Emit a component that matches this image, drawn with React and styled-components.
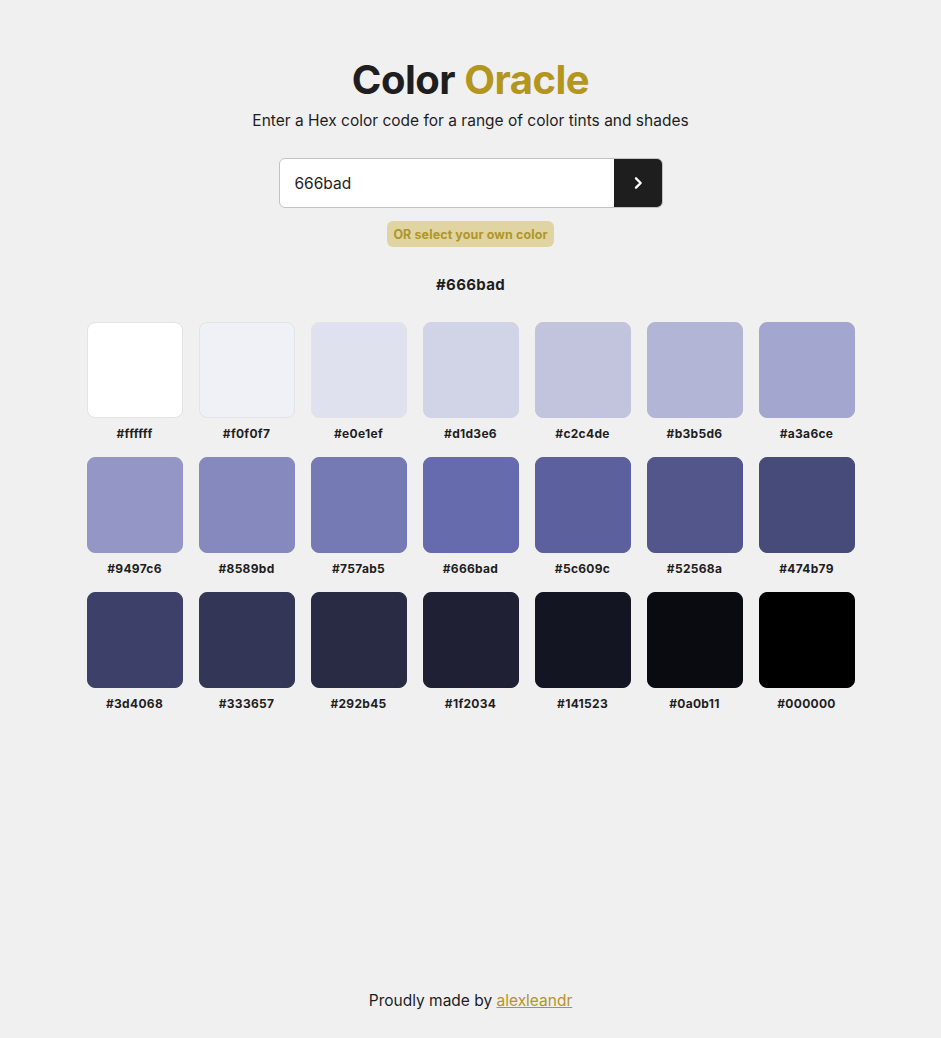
import React, { useState } from 'react';
import styled, { createGlobalStyle } from 'styled-components';

const GlobalStyle = createGlobalStyle`
  * { box-sizing: border-box; }
  html, body { margin: 0; padding: 0; }
  body {
    background: #f0f0f0;
    color: #1e1e1e;
    font-family: Inter, "Noto Sans", sans-serif;
  }
`;

const Page = styled.div`
  min-height: 100vh;
  display: flex;
  flex-direction: column;
  align-items: center;
`;

const Main = styled.main`
  flex: 1;
  display: flex;
  flex-direction: column;
  align-items: center;
  padding-top: 56px;
`;

const Title = styled.h1`
  margin: 0;
  font-size: 40px;
  line-height: 48px;
  font-weight: 700;
  letter-spacing: -0.5px;
  color: #1e1e1e;
`;

const Accent = styled.span`
  color: #b3961e;
`;

const Subtitle = styled.p`
  margin: 7px 0 0;
  font-size: 15.5px;
  line-height: 20px;
  color: #1e1e1e;
`;

const Form = styled.form`
  margin-top: 27px;
  width: 384px;
  height: 50px;
  display: flex;
  border: 1px solid #c2c2c2;
  border-radius: 6px;
  overflow: hidden;
  background: #fff;
`;

const Input = styled.input`
  flex: 1;
  border: none;
  outline: none;
  padding: 0 15px;
  font-family: inherit;
  font-size: 15.5px;
  color: #1e1e1e;
  background: transparent;
`;

const Submit = styled.button`
  width: 48px;
  border: none;
  background: #1e1e1e;
  color: #fff;
  display: flex;
  align-items: center;
  justify-content: center;
  cursor: pointer;
  padding: 0;
`;

const Picker = styled.label`
  margin-top: 13px;
  padding: 0 6px;
  height: 26px;
  display: flex;
  align-items: center;
  border-radius: 6px;
  background: #e0d5a2;
  color: #b0962a;
  font-size: 12.5px;
  font-weight: 700;
  letter-spacing: 0.1px;
  cursor: pointer;
`;

const Current = styled.h2`
  margin: 28px 0 0;
  font-size: 15px;
  line-height: 20px;
  font-weight: 700;
  letter-spacing: 0.3px;
`;

const Grid = styled.div`
  margin-top: 27px;
  display: grid;
  grid-template-columns: repeat(7, 96px);
  column-gap: 16px;
  row-gap: 15px;
`;

const Cell = styled.div`
  display: flex;
  flex-direction: column;
  align-items: center;
`;

const Swatch = styled.div`
  width: 96px;
  height: 96px;
  border-radius: 8px;
  border: 1px solid ${p => (p.$light ? '#e3e3e6' : p.$color)};
  background: ${p => p.$color};
`;

const Label = styled.span`
  margin-top: 8px;
  font-size: 12px;
  line-height: 16px;
  font-weight: 700;
  letter-spacing: 0.3px;
`;

const Footer = styled.footer`
  padding-bottom: 27px;
  font-size: 15.5px;
  line-height: 20px;
`;

const Link = styled.a`
  color: #b3961e;
`;

const shades = [
  'ffffff', 'f0f0f7', 'e0e1ef', 'd1d3e6', 'c2c4de', 'b3b5d6', 'a3a6ce',
  '9497c6', '8589bd', '757ab5', '666bad', '5c609c', '52568a', '474b79',
  '3d4068', '333657', '292b45', '1f2034', '141523', '0a0b11', '000000',
];

export default function App() {
  const [value, setValue] = useState('666bad');

  return (
    <Page>
      <GlobalStyle />
      <Main>
        <Title>Color <Accent>Oracle</Accent></Title>
        <Subtitle>Enter a Hex color code for a range of color tints and shades</Subtitle>
        <Form onSubmit={e => e.preventDefault()}>
          <Input value={value} onChange={e => setValue(e.target.value)} />
          <Submit type="submit" aria-label="Generate">
            <svg width="16" height="16" viewBox="0 0 24 24" fill="none" stroke="currentColor" strokeWidth="3.5" strokeLinecap="round" strokeLinejoin="round">
              <path d="M9 5l7 7-7 7" />
            </svg>
          </Submit>
        </Form>
        <Picker>OR select your own color</Picker>
        <Current>#666bad</Current>
        <Grid>
          {shades.map((hex, i) => (
            <Cell key={hex}>
              <Swatch $color={'#' + hex} $light={i < 3} />
              <Label>#{hex}</Label>
            </Cell>
          ))}
        </Grid>
      </Main>
      <Footer>
        Proudly made by <Link href="#">alexleandr</Link>
      </Footer>
    </Page>
  );
}
